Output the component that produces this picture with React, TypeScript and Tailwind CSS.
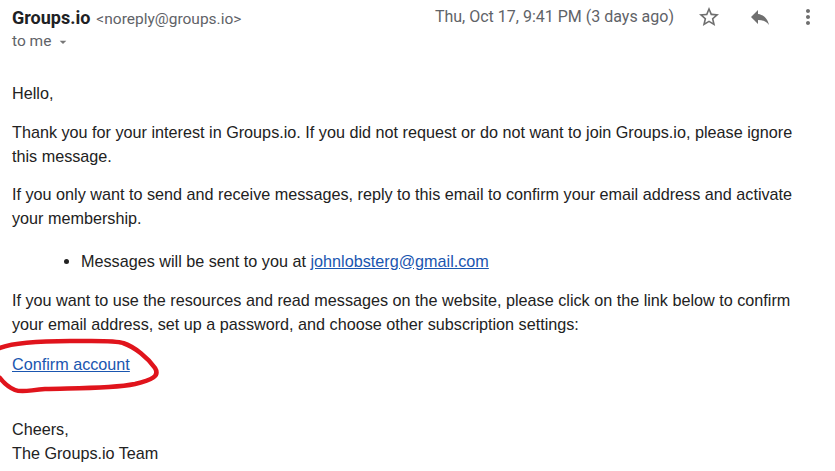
import React from "react";

export default function App() {
  return (
    <div className="w-[835px] h-[471px] bg-white overflow-hidden relative" style={{ fontFamily: "Arial, 'Liberation Sans', sans-serif" }}>
      <div className="flex items-start pl-3 pt-[4px]" style={{ fontFamily: "Roboto, sans-serif" }}>
        <div className="flex flex-col">
          <div className="flex items-baseline gap-[6px]">
            <span className="text-[18px] font-bold text-[#202124]">Groups.io</span>
            <span className="text-[15.5px] text-[#5f6368]">&lt;noreply@groups.io&gt;</span>
          </div>
          <div className="flex items-center text-[15.5px] text-[#5f6368] -mt-[1px]">
            <span>to me</span>
            <svg width="16" height="16" viewBox="0 0 24 24" className="ml-[4px]"><path d="M7 10l5 5 5-5z" fill="#777" /></svg>
          </div>
        </div>
        <div className="ml-auto flex items-center text-[16px] text-[#5f6368] pt-[1px]">
          <span className="mr-[23px]">Thu, Oct 17, 9:41 PM (3 days ago)</span>
          <svg width="24" height="24" viewBox="0 0 24 24" className="mr-[27px]"><path fill="#6f6f6f" d="M22 9.24l-7.19-.62L12 2 9.19 8.63 2 9.24l5.46 4.73L5.82 21 12 17.27 18.18 21l-1.63-7.03L22 9.24zM12 15.4l-3.76 2.27 1-4.28-3.32-2.88 4.38-.38L12 6.1l1.71 4.04 4.38.38-3.32 2.88 1 4.28L12 15.4z" /></svg>
          <svg width="24" height="24" viewBox="0 0 24 24" className="mr-[24px]"><path fill="#6f6f6f" d="M10 9V5l-7 7 7 7v-4.1c5 0 8.5 1.6 11 5.1-1-5-4-10-11-11z" /></svg>
          <svg width="24" height="24" viewBox="0 0 24 24" className="mr-[15px]"><path fill="#6f6f6f" d="M12 8c1.1 0 2-.9 2-2s-.9-2-2-2-2 .9-2 2 .9 2 2 2zm0 2c-1.1 0-2 .9-2 2s.9 2 2 2 2-.9 2-2-.9-2-2-2zm0 6c-1.1 0-2 .9-2 2s.9 2 2 2 2-.9 2-2-.9-2-2-2z" /></svg>
        </div>
      </div>
      <div className="pl-3 pr-[35px] pt-[27px] text-[16.2px] leading-[24px] text-[#222]">
        <p>Hello,</p>
        <p className="mt-[15px]">Thank you for your interest in Groups.io. If you did not request or do not want to join Groups.io, please ignore this message.</p>
        <p className="mt-[14px]">If you only want to send and receive messages, reply to this email to confirm your email address and activate your membership.</p>
        <ul className="mt-[19px] pl-[69px] list-disc">
          <li>Messages will be sent to you at <a className="text-[#1a56b0] underline">johnlobsterg@gmail.com</a></li>
        </ul>
        <p className="mt-[15px]">If you want to use the resources and read messages on the website, please click on the link below to confirm your email address, set up a password, and choose other subscription settings:</p>
        <p className="mt-[16px]"><a className="text-[#1a56b0] underline">Confirm account</a></p>
        <p className="mt-[41px]">Cheers,<br />The Groups.io Team</p>
      </div>
      <svg className="absolute left-0 top-[330px]" width="170" height="70" viewBox="0 0 170 70" fill="none">
        <path d="M0 18 C 15 12, 40 11, 70 11 C 95 11, 115 10, 123 13 C 135 17, 148 28, 155 38 C 160 46, 152 50, 135 54 C 110 59, 70 58, 45 59 C 30 60, 22 63, 15 60 C 8 57, 3 52, 0 48" stroke="#e0141c" strokeWidth="4.5" strokeLinecap="round" strokeLinejoin="round" />
      </svg>
    </div>
  );
}
